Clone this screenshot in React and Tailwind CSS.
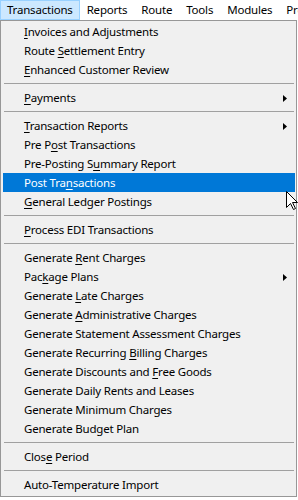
import React from 'react';

const font = "font-['Segoe_UI','Noto_Sans',sans-serif]";

// mnemonic letter is wrapped in [ ]
const menu = [
  { label: 'Transactions', active: true },
  { label: 'Reports' },
  { label: 'Route' },
  { label: 'Tools' },
  { label: 'Modules' },
  { label: 'Preferences' },
];

const items = [
  '[I]nvoices and Adjustments',
  'Route [S]ettlement Entry',
  '[E]nhanced Customer Review',
  '-',
  { text: '[P]ayments', sub: true },
  '-',
  { text: '[T]ransaction Reports', sub: true },
  'Pre P[o]st Transactions',
  'Pre-Posting S[u]mmary Report',
  { text: 'Post Tra[n]sactions', hot: true },
  '[G]eneral Ledger Postings',
  '-',
  '[P]rocess EDI Transactions',
  '-',
  'Generate [R]ent Charges',
  { text: 'Pac[k]age Plans', sub: true },
  'Generate [L]ate Charges',
  'Generate [A]dministrative Charges',
  'Generate Statement Assessment Charges',
  'Generate Recurring [B]illing Charges',
  'Generate Discounts and [F]ree Goods',
  'Generate Daily Rents and Leases',
  'Generate Minimum Charges',
  'Generate Budget Plan',
  '-',
  'Clos[e] Period',
  '-',
  'Auto-Temperature Import',
];

function Label({ text }) {
  const m = text.match(/^(.*)\[(.)\](.*)$/);
  if (!m) return <span>{text}</span>;
  return (
    <span>
      {m[1]}
      <u className="underline-offset-[2px]">{m[2]}</u>
      {m[3]}
    </span>
  );
}

function Item({ item }) {
  if (item === '-') {
    return (
      <div className="h-[9px] flex items-center px-[1px]">
        <div className="h-px w-full bg-[#a0a0a0]" />
      </div>
    );
  }
  const it = typeof item === 'string' ? { text: item } : item;
  return (
    <div
      className={
        'h-[19px] flex items-center justify-between pl-[21px] pr-[8px] ' +
        (it.hot ? 'bg-[#0078d7] text-white' : 'text-black')
      }
    >
      <Label text={it.text} />
      {it.sub && (
        <svg width="4" height="7" viewBox="0 0 4 7" className="mt-[1px]">
          <path d="M0 0 L4 3.5 L0 7 Z" fill={it.hot ? '#fff' : '#000'} />
        </svg>
      )}
    </div>
  );
}

export default function App() {
  return (
    <div className={'relative w-[298px] h-[500px] overflow-hidden bg-white text-[11.5px] tracking-[-0.2px] leading-none ' + font}>
      <div className="flex h-[20px] whitespace-nowrap">
        {menu.map((m) => (
          <div
            key={m.label}
            className={
              'flex items-center px-[6px] border ' +
              (m.active ? 'bg-[#cce8ff] border-[#99d1ff]' : 'border-transparent')
            }
          >
            {m.label}
          </div>
        ))}
      </div>

      <div className="w-[297px] border border-[#979797] bg-[#f0f0f0] pt-[1px] pb-[2px] pl-[2px] pr-[1px]">
        {items.map((item, i) => (
          <Item key={i} item={item} />
        ))}
      </div>

      {/* mouse pointer */}
      <svg className="absolute left-[286px] top-[191px]" width="13" height="20" viewBox="0 0 13 20">
        <path
          d="M0.5 0.5 L0.5 16.5 L4.5 12.5 L7.5 18.5 L9.5 17.5 L6.5 11.5 L11.5 11.5 Z"
          fill="#fff"
          stroke="#000"
          strokeWidth="1"
        />
      </svg>
    </div>
  );
}
